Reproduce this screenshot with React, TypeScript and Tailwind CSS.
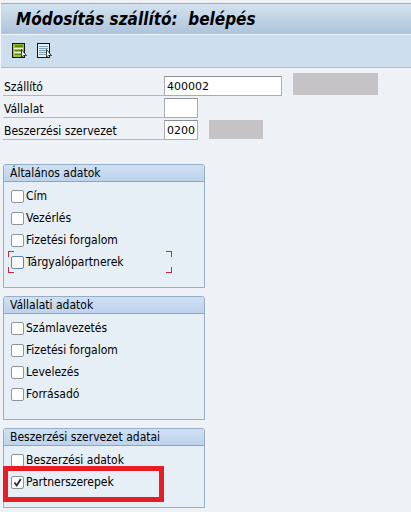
import { useState } from "react";

const SECTIONS = [
  { title: "Általános adatok", items: ["Cím", "Vezérlés", "Fizetési forgalom", "Tárgyalópartnerek"] },
  { title: "Vállalati adatok", items: ["Számlavezetés", "Fizetési forgalom", "Levelezés", "Forrásadó"] },
  { title: "Beszerzési szervezet adatai", items: ["Beszerzési adatok", "Partnerszerepek"] },
];

const FOCUSED = "Tárgyalópartnerek";
const MARKED = "Partnerszerepek";

function ListIcon({ selected }: { selected: boolean }) {
  return (
    <svg width="15" height="15" viewBox="0 0 15 15" shapeRendering="crispEdges" aria-hidden="true">
      <rect x="0.5" y="0.5" width="12" height="14" fill={selected ? "#9cc232" : "#e6f0f7"} stroke="#0c1216" />
      {selected ? (
        <>
          <path d="M3 2h8v2H3zM3 7h6v1H3zM3 11h6v1H3z" fill="#5f8a10" />
          <path d="M2 5h9v1H2zM2 9h7v1H2z" fill="#eef6c4" />
        </>
      ) : (
        <path d="M2 3h9v1H2zM2 5h9v1H2zM2 7h7v1H2zM2 9h7v1H2zM2 11h7v1H2z" fill="#7d9db5" />
      )}
      <path d="M9.5 6.5v7.5l2-1.5h3z" fill="#fff" stroke="#0c1216" strokeWidth="0.8" shapeRendering="auto" />
    </svg>
  );
}

function Field({ id, label, value, inputClass, children }: {
  id: string;
  label: string;
  value: string;
  inputClass: string;
  children?: React.ReactNode;
}) {
  return (
    <div className="flex h-[22px] items-start">
      <label htmlFor={id} className="h-5 w-[161px] shrink-0 border-b border-[#b3b7bd] pl-px leading-[22px]">
        {label}
      </label>
      <input
        id={id}
        defaultValue={value}
        className={`h-5 shrink-0 border border-[#a9adb2] border-t-[#8b9095] bg-white pl-[2px] font-['DejaVu_Sans'] text-[11px] text-black outline-none ${inputClass}`}
      />
      {children}
    </div>
  );
}

// Red corner brackets around the focused row
function FocusCorners() {
  return (
    <span className="pointer-events-none absolute inset-y-0 left-1 w-[164px]">
      <span className="absolute top-0 left-0 size-[6px] border-t border-l border-[#c8283c]" />
      <span className="absolute top-0 right-0 size-[6px] border-t border-r border-[#c8283c]" />
      <span className="absolute bottom-0 left-0 size-[6px] border-b border-l border-[#c8283c]" />
      <span className="absolute right-0 bottom-0 size-[6px] border-r border-b border-[#c8283c]" />
    </span>
  );
}

function CheckRow({ label }: { label: string }) {
  const [checked, setChecked] = useState(label === MARKED);
  const border = label === FOCUSED ? "border-[#5b86b5]" : "border-[#8e9499]";

  return (
    <label className="relative flex h-[22px] items-center gap-[2px] pl-[7px]">
      <span className="grid size-[13px] shrink-0">
        <input
          type="checkbox"
          checked={checked}
          onChange={(e) => setChecked(e.target.checked)}
          className={`col-start-1 row-start-1 size-[13px] appearance-none rounded-[2px] border bg-white ${border}`}
        />
        {checked && (
          <svg viewBox="0 0 13 13" className="pointer-events-none col-start-1 row-start-1 size-[13px]" aria-hidden="true">
            <path d="M3.5 6.5l2.2 3L9.8 3" fill="none" stroke="#2b2f38" strokeWidth="1.8" />
          </svg>
        )}
      </span>
      <span>{label}</span>
      {label === FOCUSED && <FocusCorners />}
      {label === MARKED && (
        <span className="pointer-events-none absolute -top-[5px] -left-px h-9 w-[161px] border-5 border-[#e81c24]" />
      )}
    </label>
  );
}

export default function App() {
  return (
    <div className="min-h-screen bg-[#eef1f6] font-['DejaVu_Sans_Condensed','DejaVu_Sans',sans-serif] text-[12px] text-black">
      <header className="border-l border-[#f4f8fb] pt-[3px]">
        <div className="flex h-[31px] items-center border-t border-[#9cadc0] bg-linear-to-b from-[#d3e2ee] to-[#adc4dc] pl-[15px]">
          <h1 className="text-[17px] leading-5 font-bold whitespace-pre italic">{"Módosítás szállító:  belépés"}</h1>
        </div>
        <div className="flex h-[34px] items-center gap-[10px] border-t border-b border-t-[#f3f8fc] border-b-[#a7bdd0] bg-[#cddfee] pb-[2px] pl-[11px]">
          <button type="button" aria-label="Kijelölés">
            <ListIcon selected />
          </button>
          <button type="button" aria-label="Kijelölés törlése">
            <ListIcon selected={false} />
          </button>
        </div>
      </header>

      <main className="px-[3px] pt-2">
        <form>
          <Field id="vendor" label="Szállító" value="400002" inputClass="w-[118px]">
            <span className="-mt-[3px] ml-[11px] h-[22px] w-[85px] shrink-0 bg-[#c5c3c6]" />
          </Field>
          <Field id="company" label="Vállalat" value="" inputClass="w-[34px]" />
          <Field id="purchasing" label="Beszerzési szervezet" value="0200" inputClass="w-[34px]">
            <span className="ml-[11px] h-[19px] w-[54px] shrink-0 bg-[#c5c3c6]" />
          </Field>

          <div className="mt-[22px] flex flex-col gap-2">
            {SECTIONS.map((section) => (
              <fieldset
                key={section.title}
                aria-label={section.title}
                className="w-[202px] rounded-t-[3px] border border-[#94b0c8] bg-[#e6eef6] pb-[14px]"
              >
                <div className="mb-[3px] h-[17px] rounded-t-[2px] border-b border-[#8ba6c2] bg-linear-to-b from-[#cfe0f3] to-[#bdd2ec] pl-[6px] leading-4">
                  {section.title}
                </div>
                {section.items.map((item) => (
                  <CheckRow key={item} label={item} />
                ))}
              </fieldset>
            ))}
          </div>
        </form>
      </main>
    </div>
  );
}
